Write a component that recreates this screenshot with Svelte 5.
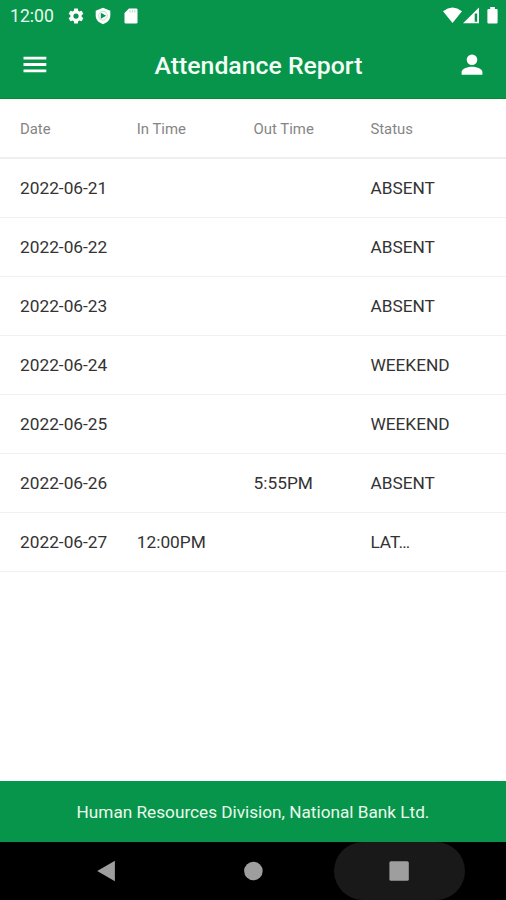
<script lang="ts">
type Attendance = {
	date: string;
	inTime: string;
	outTime: string;
	status: string;
};

const columns = ["Date", "In Time", "Out Time", "Status"];

const records: Attendance[] = [
	{ date: "2022-06-21", inTime: "", outTime: "", status: "ABSENT" },
	{ date: "2022-06-22", inTime: "", outTime: "", status: "ABSENT" },
	{ date: "2022-06-23", inTime: "", outTime: "", status: "ABSENT" },
	{ date: "2022-06-24", inTime: "", outTime: "", status: "WEEKEND" },
	{ date: "2022-06-25", inTime: "", outTime: "", status: "WEEKEND" },
	{ date: "2022-06-26", inTime: "", outTime: "5:55PM", status: "ABSENT" },
	{ date: "2022-06-27", inTime: "12:00PM", outTime: "", status: "LAT…" },
];
</script>

<div class="screen">
	<div class="statusBar">
		<span class="clock">12:00</span>
		<svg class="gear" width="18" height="18" viewBox="0 0 24 24" fill="#fff">
			<path d="M19.43 12.98c.04-.32.07-.64.07-.98s-.03-.66-.07-.98l2.11-1.65c.19-.15.24-.42.12-.64l-2-3.46c-.12-.22-.39-.3-.61-.22l-2.49 1c-.52-.4-1.08-.73-1.69-.98l-.38-2.65A.49.49 0 0 0 14 2h-4c-.25 0-.46.18-.49.42l-.38 2.65c-.61.25-1.17.59-1.69.98l-2.49-1c-.23-.09-.49 0-.61.22l-2 3.46c-.13.22-.07.49.12.64l2.11 1.65c-.04.32-.07.65-.07.98s.03.66.07.98l-2.11 1.65c-.19.15-.24.42-.12.64l2 3.46c.12.22.39.3.61.22l2.49-1c.52.4 1.08.73 1.69.98l.38 2.65c.03.24.24.42.49.42h4c.25 0 .46-.18.49-.42l.38-2.65c.61-.25 1.17-.59 1.69-.98l2.49 1c.23.09.49 0 .61-.22l2-3.46c.12-.22.07-.49-.12-.64l-2.11-1.65zM12 15.5a3.5 3.5 0 1 1 0-7 3.5 3.5 0 0 1 0 7z"></path>
		</svg>
		<svg class="shield" width="16" height="18" viewBox="0 0 16 18">
			<path fill="#fff" d="M8 .8 15.3 3.7V8.5C15.3 12.8 12.2 15.8 8 17.2 3.8 15.8.7 12.8.7 8.5V3.7Z"></path>
			<circle cx="8" cy="8.7" r="4.4" fill="none" stroke="#07954b" stroke-opacity=".25"></circle>
			<path fill="#07954b" d="M5.8 5.7 11.2 8.7 5.8 11.7Z"></path>
		</svg>
		<svg class="card" width="14" height="16" viewBox="0 0 14 16">
			<path fill="#fff" d="M5 .5H12.2Q13.5.5 13.5 1.8V14.2Q13.5 15.5 12.2 15.5H1.8Q.5 15.5.5 14.2V5Z"></path>
			<path stroke="#07954b" stroke-opacity=".3" d="M6 2v2.6M8.4 2v2.6M10.8 2v2.6"></path>
		</svg>
		<svg class="signals" width="56" height="18" viewBox="0 0 56 18">
			<path fill="#fff" d="M0 4.2Q9.5-3.2 19 4.2L9.5 16Z"></path>
			<path fill="#fff" fill-rule="evenodd" d="M20 16.2 36 .4V16.2ZM31.7 6.4V14.7H34.2V6.4Z"></path>
			<path fill="#fff" d="M47.2 0H51.8V2H53.6Q54.6 2 54.6 3V15.2Q54.6 16.4 53.6 16.4H45.4Q44.4 16.4 44.4 15.2V3Q44.4 2 45.4 2H47.2Z"></path>
		</svg>
	</div>

	<header class="appBar">
		<button class="iconButton" aria-label="Menu">
			<svg width="24" height="18" viewBox="0 0 24 18" fill="#fff">
				<path d="M.5 .8H23.3V3.6H.5ZM.5 7.1H23.3V9.9H.5ZM.5 13.4H23.3V16.2H.5Z"></path>
			</svg>
		</button>
		<h1>Attendance Report</h1>
		<button class="iconButton" aria-label="Profile">
			<svg width="22" height="22" viewBox="0 0 22 22" fill="#fff">
				<circle cx="11" cy="5.7" r="5.3"></circle>
				<path d="M.6 20.7V18C.6 14.5 7.5 12.7 11 12.7S21.4 14.5 21.4 18V20.7Z"></path>
			</svg>
		</button>
	</header>

	<main>
		<div class="row head">
			{#each columns as column}
				<span>{column}</span>
			{/each}
		</div>
		{#each records as record}
			<div class="row">
				<span>{record.date}</span>
				<span>{record.inTime}</span>
				<span>{record.outTime}</span>
				<span>{record.status}</span>
			</div>
		{/each}
	</main>

	<footer>Human Resources Division, National Bank Ltd.</footer>

	<nav>
		<button aria-label="Back">
			<svg width="20" height="22" viewBox="0 0 20 22"><path fill="#9e9e9e" d="M.2 11 17.9.7V21.3Z"></path></svg>
		</button>
		<button aria-label="Home">
			<svg width="20" height="20" viewBox="0 0 20 20"><circle cx="10.4" cy="10" r="9.3" fill="#9e9e9e"></circle></svg>
		</button>
		<button class="pressed" aria-label="Overview">
			<svg width="20" height="20" viewBox="0 0 20 20"><rect x=".4" y=".2" width="19.4" height="19.6" rx="1.6" fill="#9e9e9e"></rect></svg>
		</button>
	</nav>
</div>

<style>
	:global(body) {
		background: #fff;
	}

	.screen {
		display: flex;
		flex-direction: column;
		height: 900px;
		width: 506px;
		overflow: hidden;
		font-family: Roboto, "Liberation Sans", sans-serif;
	}

	svg {
		display: block;
		flex: none;
	}

	button {
		display: flex;
		align-items: center;
		justify-content: center;
		padding: 0;
		border: 0;
		background: none;
	}

	.statusBar {
		display: flex;
		align-items: center;
		box-sizing: border-box;
		height: 32px;
		padding: 0 7px 0 10px;
		background: #07954b;
		color: #e9f8ec;
	}

	.clock {
		width: 57px;
		font-size: 17.6px;
		line-height: 32px;
	}

	.shield {
		margin-left: 10px;
	}

	.card {
		margin-left: 13px;
	}

	.signals {
		margin-left: auto;
	}

	.appBar {
		display: grid;
		grid-template-columns: 24px 1fr 22px;
		align-items: center;
		box-sizing: border-box;
		height: 67px;
		padding: 0 23px;
		border-bottom: 1px solid #078a2c;
		background: #07954b;
	}

	h1 {
		margin: 0;
		padding: 2px 0 0 9px;
		color: #f4fff6;
		font-size: 24.8px;
		font-weight: 500;
		line-height: 64px;
		text-align: center;
	}

	main {
		flex: 1;
		background: #fff;
	}

	.row {
		display: grid;
		grid-template-columns: repeat(4, 116.8px);
		align-items: center;
		box-sizing: border-box;
		height: 59.05px;
		padding-left: 20px;
		border-bottom: 1px solid #f1f1f1;
		color: #333;
		font-size: 17.3px;
	}

	.head {
		height: 59.5px;
		padding-top: 2px;
		border-bottom: 2px solid #efefef;
		color: #858585;
		font-size: 14.9px;
	}

	footer {
		height: 61px;
		background: #07954b;
		color: #e9faec;
		font-size: 17.2px;
		line-height: 62px;
		text-align: center;
	}

	nav {
		display: flex;
		justify-content: center;
		height: 58px;
		background: #000;
	}

	nav button {
		width: 131px;
		margin: 0 7.5px;
		border-radius: 29px;
	}

	.pressed {
		background: #191919;
	}
</style>
